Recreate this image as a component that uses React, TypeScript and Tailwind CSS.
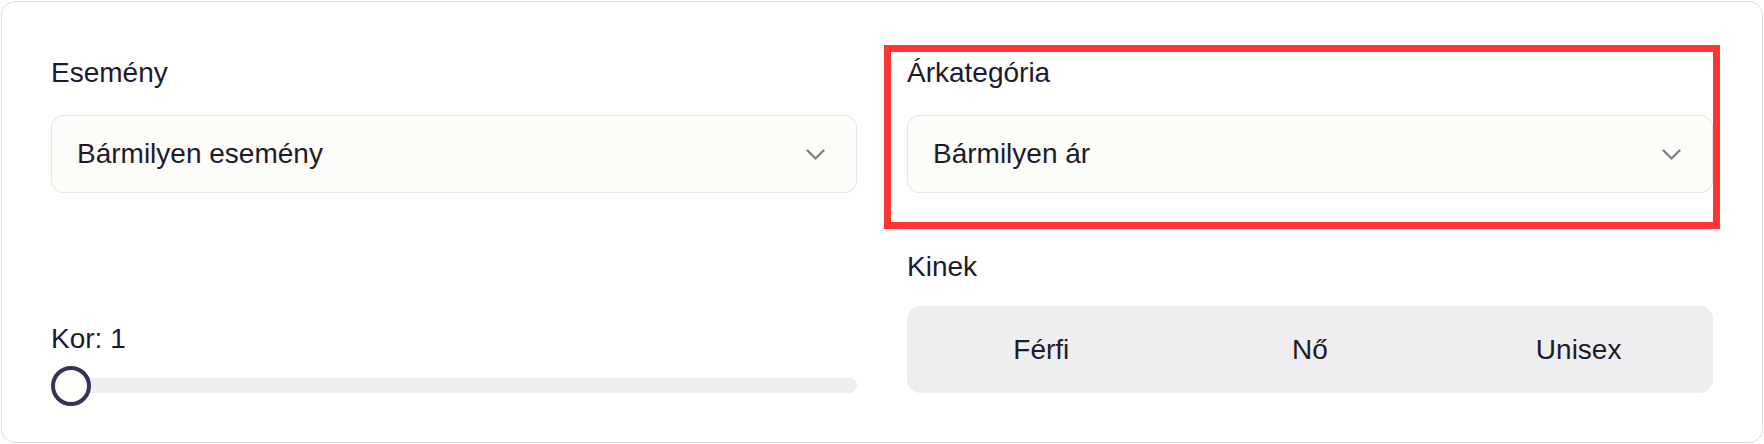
import React from 'react';

const font = { fontFamily: '"Liberation Sans", Arial, Helvetica, sans-serif' };

function Chevron() {
  return (
    <svg width="19" height="11" viewBox="0 0 19 11" fill="none" className="shrink-0">
      <polyline
        points="1.5,1.5 9.5,9.5 17.5,1.5"
        stroke="#7a7a82"
        strokeWidth="2.2"
        strokeLinecap="round"
        strokeLinejoin="round"
      />
    </svg>
  );
}

function Field({ label, value }: { label: string; value: string }) {
  return (
    <div className="flex flex-col">
      <label className="text-[28px] leading-[40px] text-[#1d1b29] mb-[22px]">{label}</label>
      <div className="flex items-center justify-between h-[78px] pl-[25px] pr-[31px] rounded-[12px] border border-[#e6e6e9] bg-[#fcfcf9]">
        <span className="text-[28px] leading-[40px] text-[#1d1b29]">{value}</span>
        <Chevron />
      </div>
    </div>
  );
}

export default function App() {
  const genders = ['Férfi', 'Nő', 'Unisex'];

  return (
    <div className="w-[1764px] h-[444px] p-px bg-white" style={font}>
      <div className="relative h-full rounded-[14px] border border-[#dcdce1] bg-white pt-[51px] pb-[49px] px-[49px]">
        <div className="grid grid-cols-2 gap-x-[50px] gap-y-[54px]">
          <Field label="Esemény" value="Bármilyen esemény" />
          <Field label="Árkategória" value="Bármilyen ár" />

          <div className="flex flex-col self-end">
            <span className="text-[28px] leading-[40px] text-[#1d1b29] mb-[19px]">Kor: 1</span>
            <div className="relative h-[15px] rounded-full bg-[#efeff1]">
              <div className="absolute left-0 top-1/2 -translate-y-1/2 w-[40px] h-[40px] rounded-full border-[4px] border-[#3b3056] bg-[#fdfdf9]" />
            </div>
          </div>

          <div className="flex flex-col">
            <span className="text-[28px] leading-[40px] text-[#1d1b29] mb-[19px]">Kinek</span>
            <div className="grid grid-cols-3 h-[87px] rounded-[14px] bg-[#eeeef0]">
              {genders.map((g) => (
                <div key={g} className="flex items-center justify-center text-[28px] text-[#1d1b29]">
                  {g}
                </div>
              ))}
            </div>
          </div>
        </div>

        {/* annotation frame */}
        <div className="absolute left-[882px] top-[43px] w-[836px] h-[184px] border-[7px] border-[#fd3535] pointer-events-none" />
      </div>
    </div>
  );
}
